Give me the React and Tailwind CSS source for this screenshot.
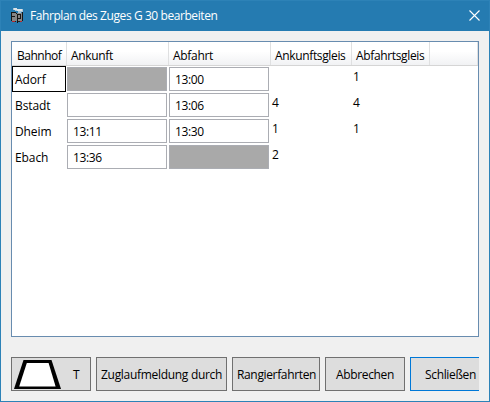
const rows = [
  { name: 'Adorf', arrival: null, departure: '13:00', arrivalTrack: '', departureTrack: '1' },
  { name: 'Bstadt', arrival: '', departure: '13:06', arrivalTrack: '4', departureTrack: '4' },
  { name: 'Dheim', arrival: '13:11', departure: '13:30', arrivalTrack: '1', departureTrack: '1' },
  { name: 'Ebach', arrival: '13:36', departure: null, arrivalTrack: '2', departureTrack: '' },
];

const columns = [
  { label: 'Bahnhof', className: 'w-[55px] pl-[5px] tracking-[-0.5px]' },
  { label: 'Ankunft', className: 'w-[102px] pl-1 tracking-[-0.35px]' },
  { label: 'Abfahrt', className: 'w-[102px] pl-1 tracking-[-0.3px]' },
  { label: 'Ankunftsgleis', className: 'w-[81px] pl-1 tracking-[-0.35px]' },
  { label: 'Abfahrtsgleis', className: 'w-[78px] pl-1 tracking-[-0.35px]' },
  { label: '', className: 'w-[48px]' },
];

function AppIcon() {
  return (
    <svg width="14" height="16" viewBox="0 0 14 16" shapeRendering="crispEdges">
      <path d="M2 0h3v1h7v3h-2v1H7V3H4V2H2z" fill="#a9c4d4" />
      <path d="M3 0h3v1h5v2H6V2H3z" fill="#dbe3e8" />
      <path d="M1 5h10v8H1z" fill="#858585" />
      <path d="M0 4h5v1H1v3h3v1H1v4H0zM6 6h4v1H7v3h2V7h1v4H7v4H6zM11 4h1v9h-1zM5 5h1v1H5z" fill="#141414" />
      <path d="M1 13h3v1H1zM9 13h2v1H9z" fill="#b52a2e" />
      <path d="M4 13h1v1H4zM7 13h2v1H7z" fill="#222" />
    </svg>
  );
}

function TimeCell({ value }) {
  return (
    <div
      className={
        'mr-[2px] h-6 w-[100px] border border-[#abadb3] pl-[5px] leading-[23px] tracking-[-0.35px] ' +
        (value === null ? 'bg-[#a9a9a9]' : 'bg-white')
      }
    >
      {value}
    </div>
  );
}

function Button({ className, children }) {
  return (
    <button className={'flex h-[34px] shrink-0 items-center border bg-[#ddd] pt-px whitespace-nowrap ' + className}>
      {children}
    </button>
  );
}

export default function App() {
  return (
    <div className="flex h-[402px] w-[490px] flex-col overflow-hidden border border-[#2d82b7] bg-[#f0f0f0] font-['Open_Sans','Noto_Sans',sans-serif] text-[12px] text-black">
      <header className="flex h-[30px] shrink-0 items-center bg-[#257bb1] pr-[9px] pl-[10px] text-white">
        <AppIcon />
        <h1 className="ml-[5px] grow leading-[30px] tracking-[-0.42px]">Fahrplan des Zuges G 30 bearbeiten</h1>
        <svg width="11" height="11" viewBox="0 0 11 11" stroke="white" strokeWidth="1.1" className="-mt-px">
          <path d="M.5.5l10 10M10.500.5l-10 10" />
        </svg>
      </header>

      <main className="mx-[10px] mt-[10px] h-[296px] w-[468px] shrink-0 border border-[#688caf] bg-white">
        <div className="flex h-6 overflow-hidden border-b border-[#d5d5d5] bg-linear-to-b from-white from-40% to-[#f1f2f4]">
          {columns.map((column, i) => (
            <div key={i} className={'h-[23px] shrink-0 border-r border-[#dfe0e1] leading-[27px] whitespace-nowrap ' + column.className}>
              {column.label}
            </div>
          ))}
        </div>
        {rows.map((row, i) => (
          <div key={row.name} className="flex h-[26px] items-center">
            <div className={'mr-px h-[26px] w-[54px] border pl-[2px] leading-[25px] tracking-[-0.1px] ' + (i === 0 ? 'border-black' : 'border-transparent')}>
              {row.name}
            </div>
            <TimeCell value={row.arrival} />
            <TimeCell value={row.departure} />
            <div className="h-[26px] w-[81px] pl-px leading-[21px]">{row.arrivalTrack}</div>
            <div className="h-[26px] pl-px leading-[21px]">{row.departureTrack}</div>
          </div>
        ))}
      </main>

      <footer className="mt-5 ml-[10px] flex w-[468px] gap-[5px] overflow-hidden">
        <Button className="w-20 border-[#707070]">
          <svg width="50" height="31" viewBox="0 0 50 31" className="-mt-px ml-px shrink-0">
            <path d="M10.500 1h28l9.500 29H1z" fill="black" />
            <path d="M13.800 4h21.800l7 23.500H6.200z" fill="white" />
          </svg>
          <span className="ml-[10px]">T</span>
        </Button>
        <Button className="w-[131px] border-[#707070] pl-[4px] tracking-[-0.3px]">Zuglaufmeldung durch</Button>
        <Button className="w-[88px] border-[#707070] pl-[4px] tracking-[-0.35px]">Rangierfahrten</Button>
        <Button className="w-20 border-[#707070] pl-[10px] tracking-[-0.35px]">Abbrechen</Button>
        <Button className="w-20 border-[#0078d7] pl-[14px] tracking-[-0.35px]">Schließen</Button>
      </footer>
    </div>
  );
}
